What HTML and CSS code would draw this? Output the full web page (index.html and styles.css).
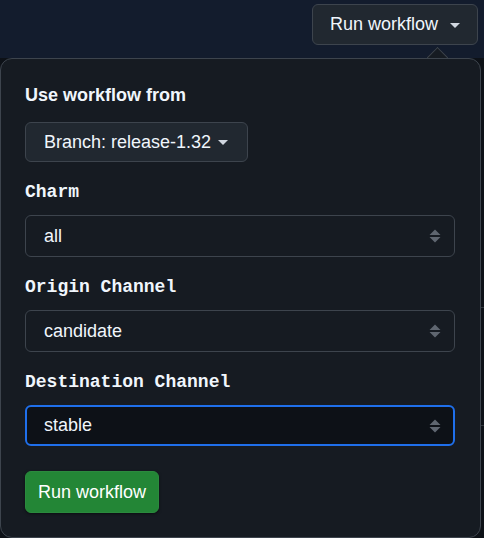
FILE: index.html
```html
<!DOCTYPE html>
<html>
<head>
<meta charset="utf-8">
<link rel="stylesheet" href="styles.css">
</head>
<body>
<div class="page">
  <header class="topbar">
    <button class="btn top-btn">Run workflow <span class="caret"></span></button>
  </header>
  <div class="content">
    <div class="rule r1"></div>
    <div class="rule r2"></div>
  </div>
  <div class="pointer"></div>
  <div class="popup">
    <div class="title">Use workflow from</div>
    <button class="btn branch-btn">Branch: release-1.32 <span class="caret"></span></button>
    <div class="label">Charm</div>
    <div class="select"><span>all</span><svg class="updown" width="12" height="16" viewBox="0 0 12 16"><path d="M6 1.5 L11.5 7 H0.5 Z M0.5 9 H11.5 L6 14.5 Z" fill="#5f6670"/></svg></div>
    <div class="label">Origin Channel</div>
    <div class="select"><span>candidate</span><svg class="updown" width="12" height="16" viewBox="0 0 12 16"><path d="M6 1.5 L11.5 7 H0.5 Z M0.5 9 H11.5 L6 14.5 Z" fill="#5f6670"/></svg></div>
    <div class="label">Destination Channel</div>
    <div class="select focused"><span>stable</span><svg class="updown" width="12" height="16" viewBox="0 0 12 16"><path d="M6 1.5 L11.5 7 H0.5 Z M0.5 9 H11.5 L6 14.5 Z" fill="#5f6670"/></svg></div>
    <button class="btn run-btn">Run workflow</button>
  </div>
</div>
</body>
</html>
```
FILE: styles.css
```css
* { box-sizing: border-box; }
html, body { margin: 0; padding: 0; }
body {
  width: 484px;
  height: 538px;
  overflow: hidden;
  background: #0d1117;
  font-family: "Liberation Sans", Arial, sans-serif;
  color: #f0f6fc;
}
.page { position: relative; width: 484px; height: 538px; }
.topbar {
  height: 58px;
  background: #131c2d;
  display: flex;
  justify-content: flex-end;
  align-items: flex-start;
  padding: 4px 6px 0 0;
}
.content { position: relative; height: 480px; }
.rule { position: absolute; right: 0; width: 4px; height: 1px; background: #30363d; }
.r1 { top: 249px; }
.r2 { top: 367px; }
.btn {
  font-family: "Liberation Sans", Arial, sans-serif;
  font-size: 18px;
  color: #f0f6fc;
  background: #212830;
  border: 1px solid #3d444d;
  border-radius: 6px;
  display: flex;
  align-items: center;
  cursor: pointer;
}
.top-btn {
  width: 166px;
  height: 41px;
  padding: 0 0 0 17px;
}
.caret {
  display: inline-block;
  width: 0; height: 0;
  border-left: 5.5px solid transparent;
  border-right: 5.5px solid transparent;
  border-top: 5.5px solid #d1d7e0;
  margin-left: 12px;
  margin-top: 1px;
}
.pointer {
  position: absolute;
  left: 430px;
  top: 50px;
  width: 15px;
  height: 15px;
  background: #161b22;
  border-left: 1px solid #3d444d;
  border-top: 1px solid #3d444d;
  transform: rotate(45deg);
  z-index: 1;
}
.popup {
  position: absolute;
  left: 0;
  top: 58px;
  width: 481px;
  height: 480px;
  background: #161b22;
  border: 1px solid #3d444d;
  border-radius: 12px;
  padding: 26px 25px 0 24px;
  display: flex;
  flex-direction: column;
  align-items: flex-start;
  z-index: 2;
}
.title {
  font-weight: bold;
  font-size: 18px;
  line-height: 20px;
  margin-bottom: 17px;
}
.branch-btn {
  height: 40px;
  width: 223px;
  padding: 0 0 0 18px;
  margin-bottom: 19px;
}
.branch-btn .caret { margin-left: 7px; }
.label {
  font-family: "Liberation Mono", "Courier New", monospace;
  font-weight: bold;
  font-size: 18px;
  line-height: 22px;
  margin-bottom: 12px;
}
.select {
  width: 430px;
  height: 42px;
  border: 1px solid #3d444d;
  border-radius: 6px;
  background: #161b22;
  display: flex;
  align-items: center;
  justify-content: space-between;
  padding: 0 13px 0 18px;
  font-size: 18px;
  color: #f0f6fc;
  margin-bottom: 19px;
}
.select.focused {
  height: 41px;
  background: #0d1117;
  border: 2px solid #1f6feb;
  padding: 0 12px 0 17px;
  margin-bottom: 25px;
}
.updown { display: block; }
.run-btn {
  height: 42px;
  width: 134px;
  padding: 0 0 0 12px;
  background: #238636;
  border: 1px solid #2b8a3e;
  color: #ffffff;
  box-shadow: 0 1px 3px rgba(0,0,0,0.5);
}
```
